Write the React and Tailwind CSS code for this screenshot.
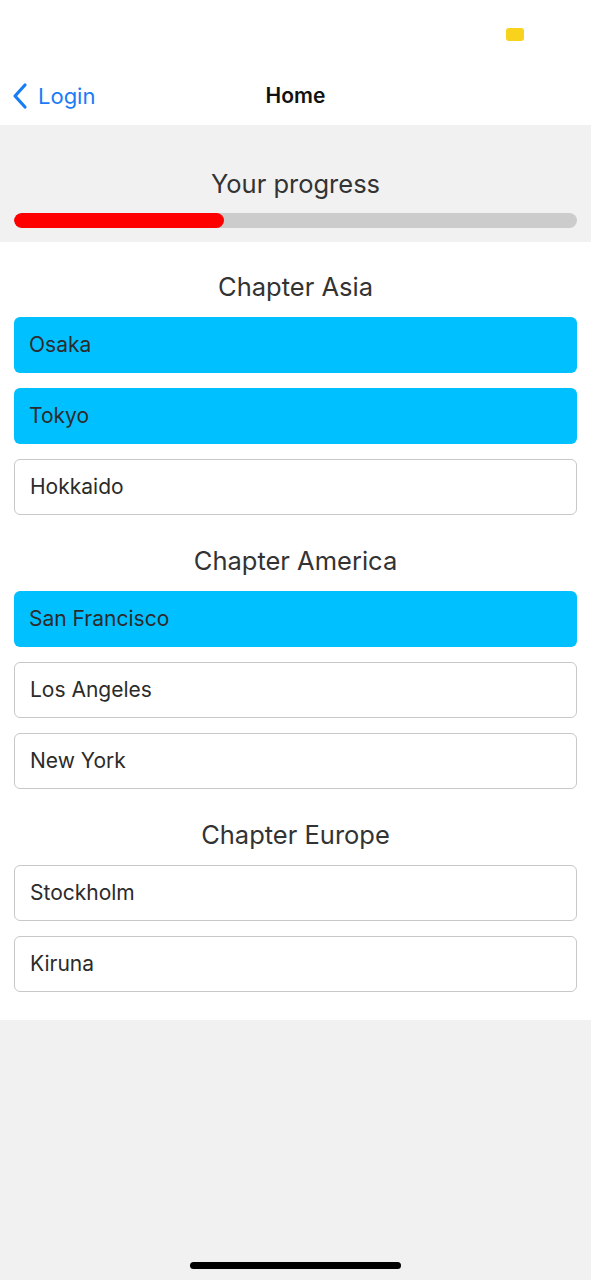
import React from 'react'

const chapters = [
  { title: 'Chapter Asia', cities: [['Osaka', true], ['Tokyo', true], ['Hokkaido', false]] },
  { title: 'Chapter America', cities: [['San Francisco', true], ['Los Angeles', false], ['New York', false]] },
  { title: 'Chapter Europe', cities: [['Stockholm', false], ['Kiruna', false]] },
]

export default function App() {
  return (
    <div className="min-h-[1280px] bg-[#f1f1f1] relative" style={{ fontFamily: 'Inter, "Noto Sans", sans-serif' }}>
      {/* status bar */}
      <div className="h-[66px] bg-white relative">
        <div className="absolute left-[506px] top-[28px] w-[18px] h-[13px] rounded-[3px] bg-[#f8d21c]" />
      </div>

      {/* nav bar */}
      <div className="h-[59px] bg-white relative flex items-center justify-center">
        <div className="absolute left-[10px] top-0 h-full flex items-center gap-[8px] text-[#1a7cf5]">
          <svg width="20" height="28" viewBox="0 0 20 28" fill="none">
            <path d="M15 3 L5 14 L15 25" stroke="#1a7cf5" strokeWidth="3.2" strokeLinecap="round" strokeLinejoin="round" />
          </svg>
          <span className="text-[22px] leading-none">Login</span>
        </div>
        <span className="text-[21px] font-semibold text-[#111]">Home</span>
      </div>

      {/* progress */}
      <div className="bg-[#f1f1f1] px-[14px] pt-[44px] pb-[14px]">
        <div className="text-center text-[25.5px] leading-[30px] text-[#333]">Your progress</div>
        <div className="mt-[14px] h-[15px] rounded-full bg-[#cccccc] overflow-hidden">
          <div className="h-full w-[210px] rounded-full bg-[#ff0000]" />
        </div>
      </div>

      {/* chapters */}
      <div className="bg-white px-[14px] pb-[28px]">
        {chapters.map((ch, i) => (
          <div key={ch.title} className={i === 0 ? 'pt-[30px]' : 'pt-[31px]'}>
            <div className="text-center text-[25.5px] leading-[30px] text-[#333] mb-[15px]">{ch.title}</div>
            <div className="flex flex-col gap-[15px]">
              {ch.cities.map(([name, done]) => (
                <div
                  key={name}
                  className={`h-[56px] rounded-[6px] px-[15px] flex items-center text-[21px] text-[#2b2b2b] ${
                    done ? 'bg-[#00c0ff]' : 'bg-white border border-[#c8c8c8]'
                  }`}
                >
                  {name}
                </div>
              ))}
            </div>
          </div>
        ))}
      </div>

      {/* home indicator */}
      <div className="absolute left-[190px] top-[1262px] w-[211px] h-[7px] rounded-full bg-black" />
    </div>
  )
}
